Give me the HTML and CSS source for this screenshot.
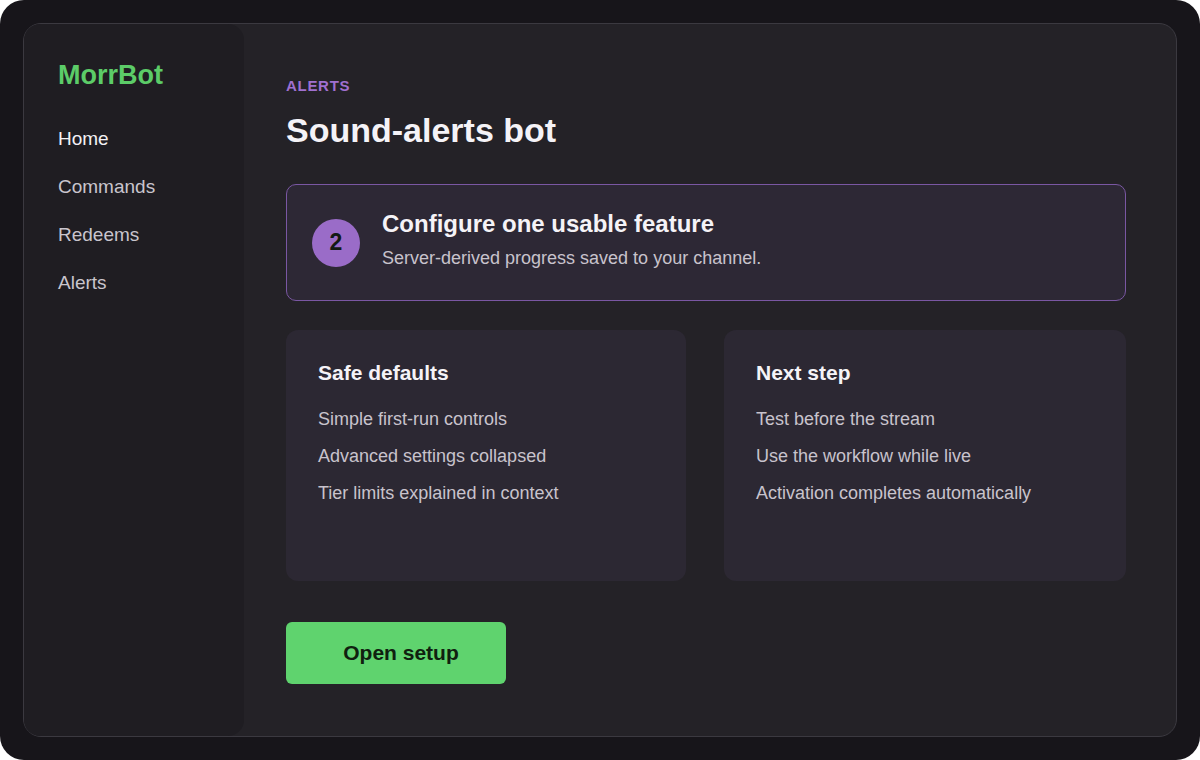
FILE: index.html
```html
<!DOCTYPE html>
<html lang="en">
<head>
<meta charset="utf-8">
<title>MorrBot</title>
<link rel="stylesheet" href="styles.css">
</head>
<body>
<div class="shell">
  <div class="frame">
    <aside class="sidebar">
      <div class="logo">MorrBot</div>
      <nav class="nav">
        <a class="nav-item active">Home</a>
        <a class="nav-item">Commands</a>
        <a class="nav-item">Redeems</a>
        <a class="nav-item">Alerts</a>
      </nav>
    </aside>
    <main class="main">
      <div class="eyebrow">ALERTS</div>
      <h1 class="title">Sound-alerts bot</h1>
      <section class="banner">
        <div class="step">2</div>
        <div class="banner-text">
          <div class="banner-title">Configure one usable feature</div>
          <div class="banner-sub">Server-derived progress saved to your channel.</div>
        </div>
      </section>
      <div class="cards">
        <section class="card">
          <h2 class="card-title">Safe defaults</h2>
          <ul class="card-list">
            <li>Simple first-run controls</li>
            <li>Advanced settings collapsed</li>
            <li>Tier limits explained in context</li>
          </ul>
        </section>
        <section class="card">
          <h2 class="card-title">Next step</h2>
          <ul class="card-list">
            <li>Test before the stream</li>
            <li>Use the workflow while live</li>
            <li>Activation completes automatically</li>
          </ul>
        </section>
      </div>
      <button class="cta">Open setup</button>
    </main>
  </div>
</div>
</body>
</html>
```
FILE: styles.css
```css
* { box-sizing: border-box; }
html, body {
  margin: 0;
  padding: 0;
  background: #ffffff;
}
body {
  font-family: "Liberation Sans", Arial, sans-serif;
}
.shell {
  width: 1200px;
  height: 760px;
  background: #17151a;
  border-radius: 24px;
  padding: 23px;
}
.frame {
  width: 1154px;
  height: 714px;
  background: #242227;
  border: 1px solid #3b3940;
  border-radius: 18px;
  display: flex;
}
.sidebar {
  width: 220px;
  flex: none;
  background: #1f1d22;
  border-radius: 16px;
  padding: 36px 20px 0 34px;
}
.logo {
  color: #5ccc68;
  font-size: 27px;
  line-height: 30px;
  font-weight: 700;
}
.nav {
  margin-top: 38px;
  display: flex;
  flex-direction: column;
  gap: 26px;
}
.nav-item {
  color: #c9c5cd;
  font-size: 19px;
  line-height: 22px;
}
.nav-item.active { color: #f3f1f5; }
.main {
  flex: 1;
  padding: 54px 50px 0 42px;
}
.eyebrow {
  color: #a070d0;
  font-size: 15px;
  line-height: 16px;
  font-weight: 700;
  letter-spacing: 0.7px;
}
.title {
  margin: 17px 0 0;
  color: #f5f3f7;
  font-size: 34px;
  line-height: 38px;
  font-weight: 700;
}
.banner {
  margin-top: 35px;
  height: 117px;
  border: 1px solid #7a57a3;
  border-radius: 10px;
  background: #2d2835;
  display: flex;
  align-items: center;
  padding: 0 25px;
  gap: 22px;
}
.step {
  width: 48px;
  height: 48px;
  border-radius: 50%;
  background: #9a6cc8;
  color: #121a14;
  font-size: 23px;
  font-weight: 700;
  display: flex;
  align-items: center;
  justify-content: center;
  flex: none;
}
.banner-text {
  padding-bottom: 6px;
}
.banner-title {
  color: #f5f3f7;
  font-size: 24px;
  line-height: 28px;
  font-weight: 700;
}
.banner-sub {
  margin-top: 9px;
  color: #c8c3cc;
  font-size: 18px;
  line-height: 22px;
}
.cards {
  margin-top: 29px;
  display: grid;
  grid-template-columns: 400px 402px;
  gap: 38px;
}
.card {
  height: 251px;
  background: #2c2833;
  border-radius: 12px;
  padding: 31px 32px 0;
}
.card-title {
  margin: 0;
  color: #f5f3f7;
  font-size: 21px;
  line-height: 24px;
  font-weight: 700;
}
.card-list {
  list-style: none;
  margin: 23px 0 0;
  padding: 0;
  display: flex;
  flex-direction: column;
  gap: 15px;
}
.card-list li {
  color: #c8c3cc;
  font-size: 18px;
  line-height: 22px;
}
.cta {
  margin-top: 41px;
  width: 220px;
  height: 62px;
  border: none;
  border-radius: 6px;
  background: #5fd36e;
  color: #10200f;
  font-family: "Liberation Sans", Arial, sans-serif;
  font-size: 21px;
  font-weight: 700;
  padding: 0 0 0 10px;
  display: block;
}
```
